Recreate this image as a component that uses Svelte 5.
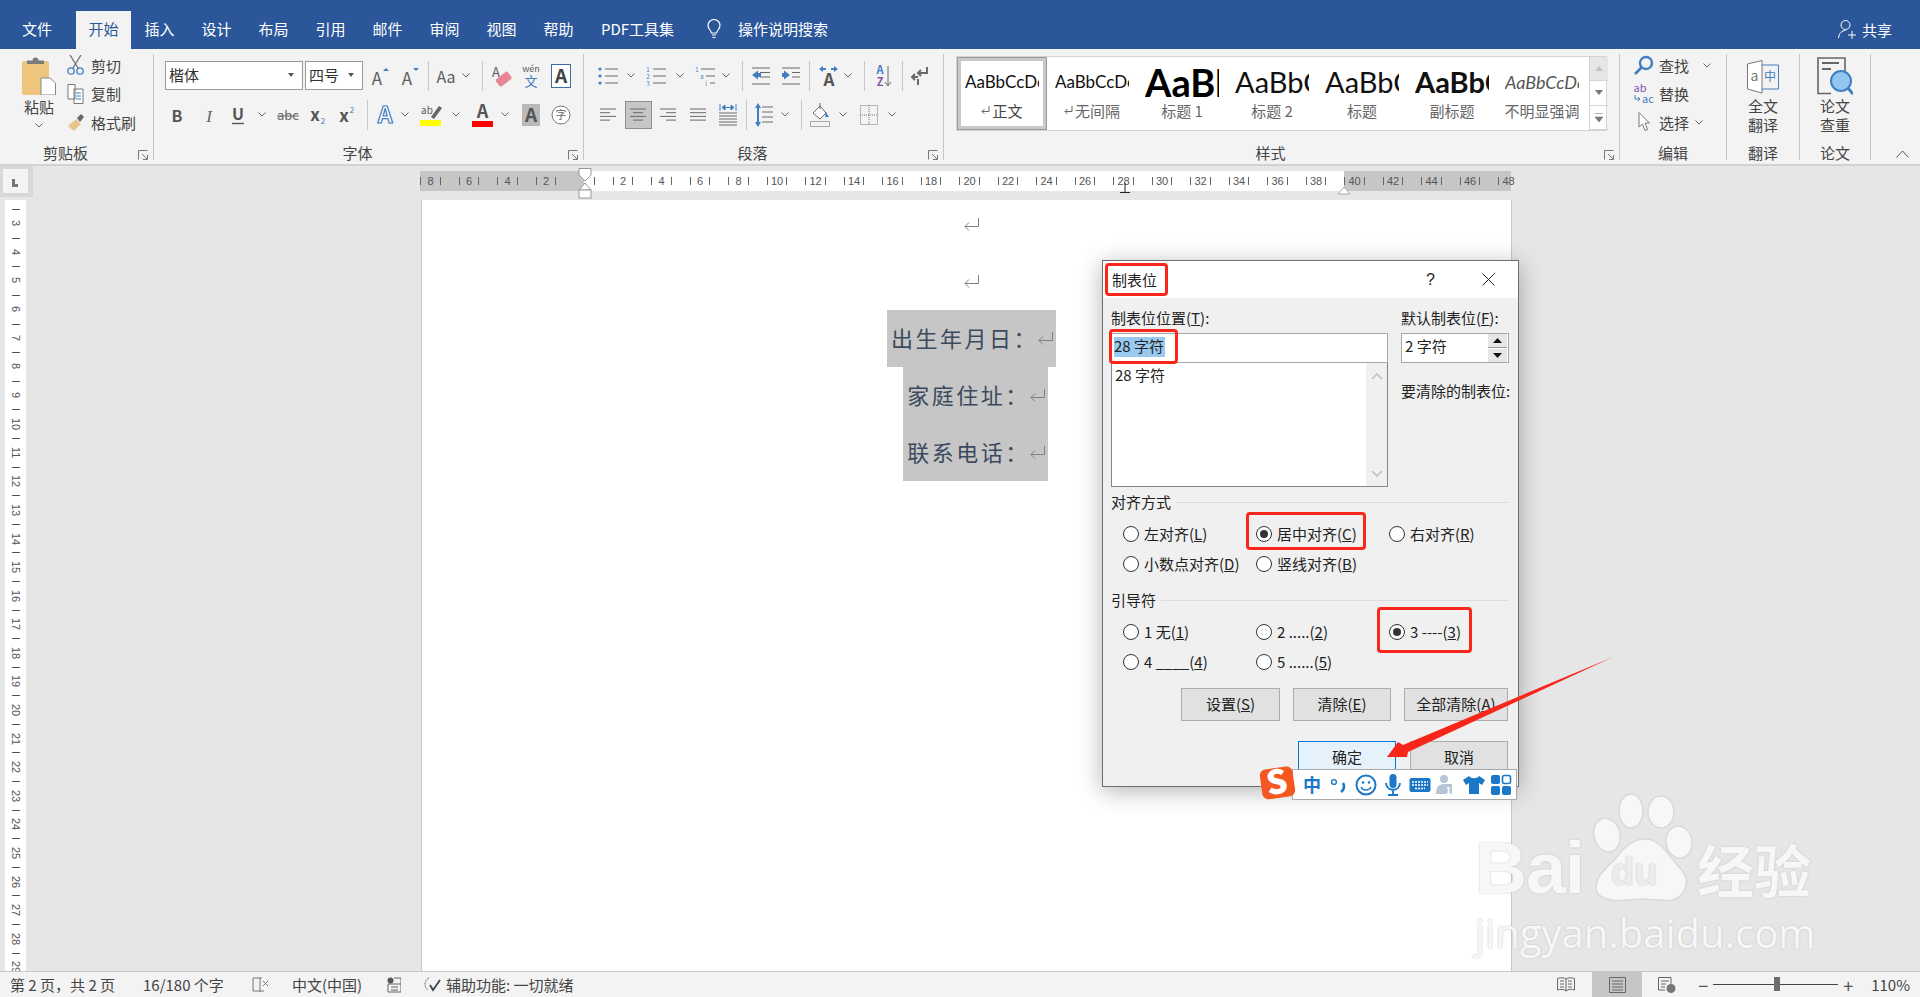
<script>
	// shorthand for the little ribbon glyphs
	const svg = (w, h, b) => `<svg width="${w}" height="${h}" viewBox="0 0 ${w} ${h}" style="display:block;overflow:visible">${b}</svg>`;
	const ln = (x1, y1, x2, y2, c = '#6a6a6a', s = 1) => `<line x1="${x1}" y1="${y1}" x2="${x2}" y2="${y2}" stroke="${c}" stroke-width="${s}"/>`;
	const txt = (x, y, t, size, c = '#5c5c5c', extra = '') => `<text x="${x}" y="${y}" font-size="${size}" fill="${c}" text-anchor="middle" ${extra}>${t}</text>`;
	const blue = '#3f7fc1';
	const stack = (rows) => rows.map(([a, b, y]) => ln(a, y, b, y)).join('');

	const icons = {
		sep: svg(1, 30, ln(0.5, 0, 0.5, 30, '#c8c8c8')),
		chev: svg(8, 5, '<polyline points="0.5,0.5 4,4 7.5,0.5" fill="none" stroke="#666"/>'),
		grow: svg(22, 22, txt(9, 20, 'A', 17) + `<path d="M15 6 L18 3 L21 6Z" fill="${blue}"/>`),
		shrink: svg(22, 22, txt(9, 20, 'A', 17) + `<path d="M15 3 L18 6 L21 3Z" fill="${blue}"/>`),
		aa: svg(24, 20, txt(12, 17, 'Aa', 16)),
		eraser: svg(24, 24, txt(7, 13, 'A', 13) + '<rect x="7" y="11" width="15" height="9" rx="2" fill="#e98696" transform="rotate(-38 14 15)"/>'),
		wen: svg(24, 26, txt(12, 9, 'wén', 9) + txt(12, 23, '文', 13, blue)),
		boxA: svg(20, 24, '<rect x="0.5" y="0.5" width="19" height="23" fill="#fff" stroke="#3a6ea5"/>' + txt(10, 19, 'A', 19, '#444', 'font-weight="700"')),
		bold: svg(14, 18, txt(6, 16, 'B', 16, '#555', 'font-weight="700"')),
		ital: svg(14, 18, txt(7, 16, 'I', 17, '#666', 'font-style="italic" font-family="Liberation Serif"')),
		under: svg(14, 20, txt(7, 15, 'U', 16, '#555', 'font-weight="700"') + ln(1, 18.5, 13, 18.5, '#555', 1.4)),
		strike: svg(22, 14, txt(11, 12, 'abc', 13, '#666') + ln(0, 8, 22, 8, '#666')),
		sub: svg(18, 20, txt(6, 16, 'x', 17, '#555', 'font-weight="700"') + txt(14, 19, '2', 8, blue)),
		sup: svg(18, 20, txt(6, 17, 'x', 17, '#555', 'font-weight="700"') + txt(14, 8, '2', 8, blue)),
		glowA: svg(20, 24, txt(10, 20, 'A', 23, '#fff', `font-weight="700" stroke="${blue}" stroke-width="1.2"`)),
		mark: svg(22, 24, txt(7, 11, 'ab', 10) + '<path d="M11 14 L19 3 L22 5 L14 16Z" fill="#666"/><rect x="0" y="17" width="21" height="6" fill="#ff0"/>'),
		redA: svg(21, 24, txt(10.5, 15, 'A', 18, '#555', 'font-weight="700"') + '<rect x="0" y="18" width="21" height="6" fill="#f00"/>'),
		grayA: svg(18, 22, '<rect width="18" height="22" fill="#b9b9b9"/>' + txt(9, 18, 'A', 19, '#555', 'font-weight="700"')),
		ruby: svg(20, 20, '<circle cx="10" cy="10" r="9" fill="#fff" stroke="#777"/>' + txt(10, 14, '字', 11, '#666')),
		bullets: svg(20, 18, `<circle cx="2" cy="2" r="1.6" fill="${blue}"/><circle cx="2" cy="9" r="1.6" fill="${blue}"/><circle cx="2" cy="16" r="1.6" fill="${blue}"/>` + stack([[7, 20, 2], [7, 20, 9], [7, 20, 16]])),
		nums: svg(20, 20, txt(2, 6, '1', 6, blue) + txt(2, 13, '2', 6, blue) + txt(2, 20, '3', 6, blue) + stack([[7, 20, 3], [7, 20, 10], [7, 20, 17]])),
		multi: svg(20, 20, txt(2, 6, '1', 6, blue) + txt(7, 13, 'a', 6, blue) + txt(11, 20, 'i', 6, blue) + stack([[6, 20, 3], [11, 20, 10], [15, 20, 17]])),
		outdent: svg(18, 18, stack([[0, 18, 1], [8, 18, 5.5], [8, 18, 10], [0, 18, 17]]) + `<path d="M0 8 L6 3.5 V6 H9 V10 H6 V12.5Z" fill="${blue}"/>`),
		indent: svg(18, 18, stack([[0, 18, 1], [10, 18, 5.5], [10, 18, 10], [0, 18, 17]]) + `<path d="M8 8 L2 3.5 V6 H0 V10 H2 V12.5Z" fill="${blue}"/>`),
		kern: svg(20, 20, txt(10, 20, 'A', 17, '#555', 'font-weight="700"') + `<path d="M0 3 L4 0 V2 H7 V4 H4 V6Z M19 3 L15 0 V2 H12 V4 H15 V6Z" fill="${blue}"/>`),
		sort: svg(18, 24, txt(5, 10, 'A', 11, blue, 'font-weight="700"') + txt(5, 22, 'Z', 11, '#8a52a8', 'font-weight="700"') + ln(13, 2, 13, 21) + '<polyline points="10,18 13,22 16,18" fill="none" stroke="#6a6a6a"/>'),
		para: svg(18, 18, '<path d="M17 0 V6 H8 M11 3 L8 6 L11 9 M8 10 H2 M5 7 L2 10 L5 13 M8 12 V18" fill="none" stroke="#6a6a6a" stroke-width="2"/>'),
		left: svg(16, 14, stack([[0, 16, 1], [0, 10, 4.7], [0, 16, 8.4], [0, 10, 12.1]])),
		center: svg(27, 28, '<rect x="0.5" y="0.5" width="26" height="27" fill="#c6c6c6" stroke="#8f8f8f"/>' + stack([[5, 21, 8], [8, 18, 11.7], [5, 21, 15.4], [8, 18, 19.1]])),
		right: svg(16, 14, stack([[0, 16, 1], [6, 16, 4.7], [0, 16, 8.4], [6, 16, 12.1]])),
		just: svg(16, 14, stack([[0, 16, 1], [0, 16, 4.7], [0, 16, 8.4], [0, 16, 12.1]])),
		dist: svg(18, 22, stack([[0, 18, 9], [0, 18, 12], [0, 18, 15], [0, 18, 18], [0, 18, 21]]) + `<path d="M1 0 V7 M17 0 V7" stroke="${blue}"/><path d="M3 3.5 H15 M3 3.5 L6 1 V6Z M15 3.5 L12 1 V6Z" stroke="${blue}" fill="${blue}"/>`),
		spacing: svg(18, 24, stack([[7, 18, 4], [7, 18, 9], [7, 18, 14], [7, 18, 19]]) + `<path d="M3 0 L6 5 H4 V19 H6 L3 24 L0 19 H2 V5 H0Z" fill="${blue}"/>`),
		fill: svg(20, 24, '<path d="M3 10 L10 3 L16 10 L10 16 Z" fill="#fff" stroke="#666"/><path d="M10 0 V6" stroke="#666"/><path d="M16 9 L19 14 L15 14Z" fill="' + blue + '"/><rect x="0.5" y="18.5" width="19" height="5" fill="#f3f3f3" stroke="#aaa"/>'),
		borders: svg(18, 20, '<rect x="0.5" y="0.5" width="17" height="19" fill="none" stroke="#777" stroke-dasharray="1 1"/><path d="M9 0 V20 M0 10 H18" stroke="#777" stroke-dasharray="1 1"/>')
	};

	const fontTop = [[378, 'grow'], [408, 'shrink'], [427, 'sep'], [445, 'aa'], [465, 'chev'], [481, 'sep'], [500, 'eraser'], [530, 'wen'], [560, 'boxA']];
	const fontBottom = [[177, 'bold'], [208, 'ital'], [237, 'under'], [261, 'chev'], [287, 'strike'], [317, 'sub'], [346, 'sup'], [366, 'sep'], [384, 'glowA'], [404, 'chev'], [430, 'mark'], [455, 'chev'], [481, 'redA'], [504, 'chev'], [530, 'grayA'], [560, 'ruby']];
	const paraTop = [[608, 'bullets'], [631, 'chev'], [656, 'nums'], [680, 'chev'], [705, 'multi'], [726, 'chev'], [742, 'sep'], [761, 'outdent'], [791, 'indent'], [809, 'sep'], [829, 'kern'], [848, 'chev'], [864, 'sep'], [884, 'sort'], [902, 'sep'], [919, 'para']];
	const paraBottom = [[608, 'left'], [638, 'center'], [668, 'right'], [698, 'just'], [728, 'dist'], [746, 'sep'], [764, 'spacing'], [785, 'chev'], [801, 'sep'], [820, 'fill'], [843, 'chev'], [869, 'borders'], [892, 'chev']];

	const tabs = ['插入', '设计', '布局', '引用', '邮件', '审阅', '视图', '帮助'];

	const styles = [
		{ preview: 'AaBbCcDc', label: '正文', cls: 'normal', mark: true, active: true },
		{ preview: 'AaBbCcDc', label: '无间隔', cls: 'normal', mark: true },
		{ preview: 'AaBl', label: '标题 1', cls: 'h1' },
		{ preview: 'AaBbC', label: '标题 2', cls: 'h2' },
		{ preview: 'AaBbC', label: '标题', cls: 'h2' },
		{ preview: 'AaBbC', label: '副标题', cls: 'sub' },
		{ preview: 'AaBbCcDc', label: '不明显强调', cls: 'hint' }
	];

	const rulerMarks = Array.from({ length: 29 }, (_, i) => (i === 4 ? '' : Math.abs(i - 4) * 2));
	const sideMarks = Array.from({ length: 27 }, (_, i) => i + 3);

	const doc = ['出生年月日：', '家庭住址：', '联系电话：'];
</script>

{#snippet tools(row, from)}
	{#each row as t, i}
		<span class="cell" style:margin-left="{t[0] - (i ? row[i - 1][0] : from)}px">{@html icons[t[1]]}</span>
	{/each}
{/snippet}

{#snippet launcher()}
	<svg class="launcher" width="10" height="10" viewBox="0 0 10 10">
		<path d="M0.5 9.5 V0.5 H9.5 M4 4 L9 9 M5 9.5 H9.5 V5" fill="none" stroke="#777" />
	</svg>
{/snippet}

{#snippet pilcrow()}
	<svg class="pil" width="15" height="13" viewBox="0 0 15 13">
		<path d="M14.5 0 V8.5 H1 M5 4.5 L1 8.5 L5 12.5" fill="none" stroke="#808080" />
	</svg>
{/snippet}

<div class="word">
	<header class="menu">
		<span class="tab file">文件</span>
		<span class="tab active">开始</span>
		{#each tabs as t}
			<span class="tab">{t}</span>
		{/each}
		<span class="tab pdf">PDF工具集</span>
		<svg class="bulb" width="14" height="20" viewBox="0 0 14 20">
			<path d="M4.5 14 C4 11 1 10 1 6.5 A6 6 0 0 1 13 6.5 C13 10 10 11 9.5 14 Z M5 16 H9 M5.5 18.5 H8.5" fill="none" stroke="#fff" stroke-width="1.2" />
		</svg>
		<span class="search">操作说明搜索</span>
		<span class="share">
			<svg width="18" height="20" viewBox="0 0 18 20">
				<circle cx="7.5" cy="6" r="4.5" fill="none" stroke="#fff" />
				<path d="M0.5 19 C1 14 4 11.5 7.5 11.5 M10 16 H18 M14 12 V20" fill="none" stroke="#fff" />
			</svg>
			共享
		</span>
	</header>

	<section class="ribbon">
		<div class="group g-clip">
			<div class="clip">
				<div class="paste">
					<svg width="34" height="38" viewBox="0 0 34 38">
						<rect x="0" y="4" width="27" height="34" rx="2" fill="#edc57c" />
						<path d="M5 7 V3.5 H10.5 A3 3 0 0 1 16.5 3.5 H22 V7Z" fill="#7b7b7b" />
						<path d="M19 21 H28 L33.5 26 V38 H19Z" fill="#fff" stroke="#888" />
					</svg>
					<span>粘贴</span>
					{@html icons.chev}
				</div>
				<div class="clip-list">
					<div>
						<svg width="17" height="20" viewBox="0 0 17 20">
							<path d="M3 0 L11 13 M14 0 L6 13" stroke="#777" stroke-width="1.4" />
							<circle cx="4" cy="16" r="3.2" fill="none" stroke={blue} stroke-width="1.3" />
							<circle cx="13" cy="16" r="3.2" fill="none" stroke={blue} stroke-width="1.3" />
						</svg>
						剪切
					</div>
					<div>
						<svg width="17" height="20" viewBox="0 0 17 20">
							<path d="M1 .5 H8 V15 H1Z M7 5 H16 V19.5 H7Z" fill="#fff" stroke="#777" />
							<path d="M9 9 H14 M9 12 H14 M9 15 H14" stroke={blue} />
						</svg>
						复制
					</div>
					<div>
						<svg width="17" height="20" viewBox="0 0 17 20">
							<path d="M1 14 L9 7 L14 12 L7 19Z" fill="#e5c48d" />
							<path d="M10 6 L14 2 L17 5 L13 10Z" fill="#666" />
						</svg>
						格式刷
					</div>
				</div>
			</div>
			<div class="group-label">剪贴板</div>
			{@render launcher()}
		</div>

		<div class="group g-font">
			<div class="row">
				<div class="select name">楷体<i></i></div>
				<div class="select size">四号<i></i></div>
				{@render tools(fontTop, 362)}
			</div>
			<div class="row">{@render tools(fontBottom, 153)}</div>
			<div class="group-label">字体</div>
			{@render launcher()}
		</div>

		<div class="group g-para">
			<div class="row">{@render tools(paraTop, 584)}</div>
			<div class="row">{@render tools(paraBottom, 584)}</div>
			<div class="group-label">段落</div>
			{@render launcher()}
		</div>

		<div class="group g-styles">
			<div class="gallery">
				{#each styles as s}
					<div class="style" class:active={s.active}>
						<div class="preview {s.cls}"><span>{s.preview}</span></div>
						<div class="style-name">
							{#if s.mark}<svg width="9" height="9" viewBox="0 0 9 9"><path d="M8 0 V5.5 H1 M3.5 3 L1 5.5 L3.5 8" fill="none" stroke="#666" /></svg>{/if}
							{s.label}
						</div>
					</div>
				{/each}
				<div class="gallery-scroll">
					<div class="up"><svg width="8" height="5" viewBox="0 0 8 5"><path d="M0 5 L4 0 L8 5Z" fill="#c0c0c0" /></svg></div>
					<div><svg width="8" height="5" viewBox="0 0 8 5"><path d="M0 0 L4 5 L8 0Z" fill="#777" /></svg></div>
					<div><svg width="8" height="9" viewBox="0 0 8 9"><path d="M0 .5 H8 M0 4 L4 9 L8 4Z" fill="#777" stroke="#777" stroke-width=".6" /></svg></div>
				</div>
			</div>
			<div class="group-label">样式</div>
			{@render launcher()}
		</div>

		<div class="group g-edit">
			<div class="edit-list">
				<div>
					<svg width="20" height="20" viewBox="0 0 20 20">
						<circle cx="12" cy="8" r="6" fill="none" stroke={blue} stroke-width="2.4" />
						<path d="M7.5 12.5 L1 19" stroke={blue} stroke-width="2.6" />
					</svg>
					<span>查找</span>{@html icons.chev}
				</div>
				<div>
					<svg width="20" height="20" viewBox="0 0 20 20">
						<text x="6" y="8" font-size="11" fill="#8a52a8" text-anchor="middle">ab</text>
						<text x="14" y="19" font-size="11" fill={blue} text-anchor="middle">ac</text>
						<path d="M1 11 V15 H6 M4 13 L6 15 L4 17" fill="none" stroke={blue} />
					</svg>
					<span>替换</span>
				</div>
				<div class="pick">
					<svg width="20" height="20" viewBox="0 0 20 20">
						<path d="M5 0.5 V15 L8.5 12 L11 18.5 L13.5 17.5 L11 11 L15.5 11Z" fill="#fff" stroke="#777" />
					</svg>
					<span>选择</span>{@html icons.chev}
				</div>
			</div>
			<div class="group-label">编辑</div>
		</div>

		<div class="group g-trans">
			<div class="big">
				<svg width="32" height="34" viewBox="0 0 32 34">
					<path d="M0.5 4 L15 0.5 V33 L0.5 29Z" fill="#fff" stroke="#777" />
					<text x="7.5" y="21" font-size="14" fill="#777" text-anchor="middle">a</text>
					<path d="M15 5 H31.5 V29 H15" fill="none" stroke={blue} />
					<text x="23" y="21" font-size="12" fill={blue} text-anchor="middle">中</text>
				</svg>
				<span>全文<br />翻译</span>
			</div>
			<div class="group-label">翻译</div>
		</div>

		<div class="group g-paper">
			<div class="big">
				<svg width="36" height="38" viewBox="0 0 36 38">
					<path d="M14 36.5 H1 V1 H28 V14" fill="none" stroke="#666" stroke-width="1.6" />
					<path d="M5 6 H22 M5 12 H14" stroke="#666" stroke-width="2" />
					<circle cx="24" cy="24" r="10" fill="#92c5ef" stroke={blue} stroke-width="2" />
					<path d="M31 31 L36 37" stroke={blue} stroke-width="3" />
				</svg>
				<span>论文<br />查重</span>
			</div>
			<div class="group-label">论文</div>
		</div>

		<svg class="collapse" width="13" height="8" viewBox="0 0 13 8">
			<polyline points="0.5,7.5 6.5,1 12.5,7.5" fill="none" stroke="#555" />
		</svg>
	</section>

	<main class="workspace">
		<div class="top-strip">
			<div class="corner"><i></i></div>
			<div class="ruler">
				{#each rulerMarks as m}
					<span class="mark-cell" class:blank={m === ''}>{m}</span>
				{/each}
				<svg class="indent" width="14" height="31" viewBox="0 0 14 31">
					<path d="M1 .5 H13 V7 L7 13 L1 7Z M1 22 L7 15 L13 22Z" fill="#fff" stroke="#999" />
					<rect x="1" y="22" width="12" height="8" fill="#fff" stroke="#999" />
				</svg>
				<svg class="tabstop" width="10" height="10" viewBox="0 0 10 10"><path d="M5 0 V9 M0 9.5 H10" stroke="#222" /></svg>
				<svg class="indent-right" width="14" height="9" viewBox="0 0 14 9"><path d="M1 8 L7 1 L13 8Z" fill="#fff" stroke="#aaa" /></svg>
			</div>
		</div>
		<div class="desk">
			<div class="side-ruler">
				{#each sideMarks as n}
					<div class="side-cell"><i></i><span>{n}</span></div>
				{/each}
			</div>
			<div class="page">
				<div class="line">{@render pilcrow()}</div>
				<div class="line">{@render pilcrow()}</div>
				{#each doc as d, i}
					<div class="line"><span class="picked" class:narrow={i > 0}>{d}{@render pilcrow()}</span></div>
				{/each}
			</div>
		</div>
	</main>

	<footer class="status">
		<span class="s-a">第 2 页，共 2 页</span>
		<span class="s-b">16/180 个字</span>
		<svg class="s-c" width="18" height="16" viewBox="0 0 18 16">
			<path d="M8 1 H1 V14 H8 M10 1 H8 V15 M12 14 H8" fill="none" stroke="#777" />
			<path d="M11 4 L16 9 M16 4 L11 9" stroke="#777" />
		</svg>
		<span class="s-d">中文(中国)</span>
		<svg class="s-e" width="14" height="16" viewBox="0 0 14 16">
			<circle cx="3.5" cy="3.5" r="3" fill="#555" />
			<path d="M7 1 H14 V15 H1 V7 H14 M4 10 H11 M4 13 H11" fill="none" stroke="#666" />
		</svg>
		<svg class="s-f" width="18" height="18" viewBox="0 0 18 18">
			<path d="M6 2 A7 7 0 0 0 2 9 A7 7 0 0 0 5 14" fill="none" stroke="#666" stroke-dasharray="2 1" />
			<path d="M7 9 L10 14 L17 4" fill="none" stroke="#444" stroke-width="1.8" />
		</svg>
		<span class="s-g">辅助功能: 一切就绪</span>
		<div class="view">
			<svg class="v-read" width="18" height="15" viewBox="0 0 18 15">
				<path d="M9 2 C7 .5 3 .5 .5 1.5 V13 C3 12 7 12 9 14 C11 12 15 12 17.5 13 V1.5 C15 .5 11 .5 9 2 V14 M3 4 H7 M3 7 H7 M3 10 H7 M11 4 H15 M11 7 H15 M11 10 H15" fill="none" stroke="#666" />
			</svg>
			<div class="v-print">
				<svg width="17" height="16" viewBox="0 0 17 16">
					<path d="M.5 .5 H16.5 V15.5 H.5Z M3 4 H14 M3 7 H14 M3 10 H14 M3 13 H14" fill="none" stroke="#666" />
				</svg>
			</div>
			<svg class="v-web" width="18" height="16" viewBox="0 0 18 16">
				<path d="M.5 .5 H13 V7 M.5 .5 V13 H7 M3 4 H11 M3 7 H8 M3 10 H7" fill="none" stroke="#666" />
				<circle cx="13" cy="11.5" r="4.5" fill="#777" />
			</svg>
			<div class="zoom">
				<span class="z-sign">−</span>
				<div class="z-track"><i></i></div>
				<span class="z-sign">+</span>
			</div>
			<span class="z-value">110%</span>
		</div>
	</footer>

	<div class="watermark" aria-hidden="true">
		<svg class="paw" width="108" height="112" viewBox="0 0 108 112">
			<g fill="#f7f7f7" stroke="#d9d9d9" stroke-width="1.5">
				<ellipse cx="41" cy="18" rx="12" ry="17" />
				<ellipse cx="71" cy="19" rx="13" ry="16" />
				<ellipse cx="17" cy="42" rx="13" ry="17" transform="rotate(-15 17 42)" />
				<ellipse cx="89" cy="49" rx="13" ry="16" transform="rotate(-10 89 49)" />
				<path d="M7 100 C2 85 16 76 26 65 C34 54 44 45 56 46 C68 46 76 58 84 68 C92 78 102 84 93 100 C84 112 68 106 53 106 C38 106 18 112 7 100Z" />
			</g>
		</svg>
		<span class="wm-bai">Bai</span>
		<span class="wm-du">du</span>
		<span class="wm-cn">经验</span>
		<span class="wm-url">jingyan.baidu.com</span>
	</div>

	<div class="dialog">
		<div class="d-title">
			<span>制表位</span>
			<span class="d-help">?</span>
			<svg class="d-close" width="13" height="13" viewBox="0 0 13 13"><path d="M.5 .5 L12.5 12.5 M12.5 .5 L.5 12.5" stroke="#222" /></svg>
		</div>
		<div class="d-body">
			<div class="d-top">
				<div>
					<div class="d-label">制表位位置(<u>T</u>):</div>
					<div class="field"><span class="sel">28 字符</span></div>
					<div class="listbox">
						<div class="list-text">28 字符</div>
						<div class="list-scroll">
							<svg width="12" height="7" viewBox="0 0 12 7"><polyline points="1,6 6,1 11,6" fill="none" stroke="#bbb" stroke-width="1.4" /></svg>
							<svg width="12" height="7" viewBox="0 0 12 7"><polyline points="1,1 6,6 11,1" fill="none" stroke="#bbb" stroke-width="1.4" /></svg>
						</div>
					</div>
				</div>
				<div>
					<div class="d-label">默认制表位(<u>F</u>):</div>
					<div class="field spin-field">
						<span>2 字符</span>
						<div class="spin">
							<div><svg width="9" height="5" viewBox="0 0 9 5"><path d="M0 5 L4.5 0 L9 5Z" fill="#111" /></svg></div>
							<div><svg width="9" height="5" viewBox="0 0 9 5"><path d="M0 0 L4.5 5 L9 0Z" fill="#111" /></svg></div>
						</div>
					</div>
					<div class="d-label clear-label">要清除的制表位:</div>
				</div>
			</div>

			<div class="legend">对齐方式</div>
			<div class="radios">
				<label class="radio"><i></i><span>左对齐(<u>L</u>)</span></label>
				<label class="radio on"><i></i><span>居中对齐(<u>C</u>)</span></label>
				<label class="radio"><i></i><span>右对齐(<u>R</u>)</span></label>
				<label class="radio"><i></i><span>小数点对齐(<u>D</u>)</span></label>
				<label class="radio"><i></i><span>竖线对齐(<u>B</u>)</span></label>
			</div>

			<div class="legend second">引导符</div>
			<div class="radios">
				<label class="radio"><i></i><span>1 无(<u>1</u>)</span></label>
				<label class="radio"><i></i><span>2 .....(<u>2</u>)</span></label>
				<label class="radio on"><i></i><span>3 ----(<u>3</u>)</span></label>
				<label class="radio"><i></i><span>4 ____(<u>4</u>)</span></label>
				<label class="radio"><i></i><span>5 ......(<u>5</u>)</span></label>
			</div>

			<div class="btns">
				<button class="w99">设置(<u>S</u>)</button>
				<button class="w98">清除(<u>E</u>)</button>
				<button class="w104">全部清除(<u>A</u>)</button>
			</div>
			<div class="btns ok-row">
				<button class="w98 primary">确定</button>
				<button class="w98">取消</button>
			</div>
		</div>

		<i class="red r-title"></i>
		<i class="red r-field"></i>
		<i class="red r-center"></i>
		<i class="red r-leader"></i>
	</div>

	<div class="ime">
		<svg width="22" height="22" viewBox="0 0 22 22"><text x="11" y="18" font-size="18" font-weight="700" fill="#1b78c9" text-anchor="middle">中</text></svg>
		<svg width="22" height="22" viewBox="0 0 22 22"><circle cx="6" cy="8" r="2.4" fill="none" stroke="#1b78c9" stroke-width="1.4" /><path d="M15 9 C17 12 16 16 13 18" fill="none" stroke="#1b78c9" stroke-width="2.6" /></svg>
		<svg width="22" height="22" viewBox="0 0 22 22"><circle cx="11" cy="11" r="9.5" fill="none" stroke="#1b78c9" stroke-width="2" /><circle cx="8" cy="8.5" r="1.3" fill="#1b78c9" /><circle cx="14" cy="8.5" r="1.3" fill="#1b78c9" /><path d="M6 13 C8 17 14 17 16 13" fill="none" stroke="#1b78c9" stroke-width="1.6" /></svg>
		<svg width="22" height="22" viewBox="0 0 22 22"><rect x="7.5" y="0" width="7" height="14" rx="3.5" fill="#1b78c9" /><path d="M4 9 C4 18 18 18 18 9 M11 16 V20 M6 21 H16" fill="none" stroke="#1b78c9" stroke-width="1.8" /></svg>
		<svg width="22" height="22" viewBox="0 0 22 22"><rect x=".5" y="4" width="21" height="14" rx="2" fill="#1b78c9" /><path d="M3 8 H19 M3 11 H19 M6 14.5 H16" stroke="#fff" stroke-width="1.6" stroke-dasharray="2 1" /></svg>
		<svg width="22" height="22" viewBox="0 0 22 22"><circle cx="8" cy="5" r="4" fill="#b7c6d6" /><path d="M0 20 C0 12 4 10 8 10 H16 V20Z" fill="#b7c6d6" /><text x="15" y="20" font-size="9" font-weight="700" fill="#fff" text-anchor="middle">17</text></svg>
		<svg width="22" height="22" viewBox="0 0 22 22"><path d="M6 2 L0 6 L3 11 L6 9 V20 H16 V9 L19 11 L22 6 L16 2 C14 5 8 5 6 2Z" fill="#1b78c9" /></svg>
		<svg width="22" height="22" viewBox="0 0 22 22"><rect x="1" y="1" width="9" height="9" rx="2" fill="#1b78c9" /><rect x="12.5" y="1.5" width="8" height="8" rx="2" fill="#fff" stroke="#1b78c9" stroke-width="1.6" /><rect x="1" y="12" width="9" height="9" rx="2" fill="#1b78c9" /><rect x="12" y="12" width="9" height="9" rx="2" fill="#1b78c9" /></svg>
	</div>
	<svg class="ime-logo" width="38" height="36" viewBox="0 0 38 36">
		<rect x="2" y="3" width="33" height="30" rx="6" fill="#f4571f" transform="rotate(-8 18 18)" />
		<text x="18" y="29" font-size="33" font-weight="900" fill="#fff" text-anchor="middle" transform="rotate(-8 18 18)">S</text>
	</svg>

	<svg class="arrow" width="240" height="110" viewBox="1380 650 240 110">
		<polygon points="1613,657 1408,752 1407,757 1387,757 1398,742 1403,745" fill="#f8261a" />
	</svg>
</div>

<style>
	:global(body) {
		margin: 0;
	}

	.word {
		position: relative;
		display: flex;
		flex-direction: column;
		width: 1920px;
		height: 997px;
		overflow: hidden;
		background: #e6e6e6;
		font-family: 'Noto Sans CJK SC', 'Liberation Sans', sans-serif;
		font-size: 15px;
		color: #444;
	}

	/* title / tab strip */
	.menu {
		display: flex;
		align-items: flex-end;
		flex: none;
		height: 49px;
		padding-left: 8px;
		background: #2b579a;
		color: #fff;
	}

	.tab {
		width: 57px;
		height: 38px;
		line-height: 36px;
		text-align: center;
	}

	.tab.file {
		width: 58px;
		margin-right: 10px;
	}

	.tab.active {
		width: 55px;
		background: #f3f3f3;
		color: #2b579a;
	}

	.tab.pdf {
		width: auto;
		padding: 0 14px;
	}

	.bulb {
		align-self: center;
		margin: 9px 0 0 19px;
	}

	.search {
		height: 38px;
		line-height: 36px;
		margin-left: 17px;
	}

	.share {
		display: flex;
		align-items: center;
		gap: 6px;
		height: 36px;
		margin-bottom: 2px;
		margin-left: auto;
		padding-right: 28px;
	}

	/* ribbon */
	.ribbon {
		position: relative;
		display: flex;
		flex: none;
		box-sizing: border-box;
		height: 117px;
		padding-top: 5px;
		background: #f3f3f3;
		border-bottom: 2px solid #d2d2d2;
	}

	.group {
		position: relative;
		display: flex;
		flex-direction: column;
		box-sizing: border-box;
		height: 106px;
		border-right: 1px solid #c4c4c4;
	}

	.g-clip { width: 154px; }
	.g-font { width: 430px; }
	.g-para { width: 360px; }
	.g-styles { width: 676px; }
	.g-edit { width: 107px; }
	.g-trans { width: 73px; }
	.g-paper { width: 71px; }

	.group-label {
		position: absolute;
		left: 0;
		right: 0;
		top: 88px;
		height: 22px;
		line-height: 22px;
		text-align: center;
	}

	.g-clip .group-label,
	.g-font .group-label,
	.g-para .group-label,
	.g-styles .group-label {
		right: 22px;
	}

	.launcher {
		position: absolute;
		right: 5px;
		bottom: 0;
	}

	.collapse {
		position: absolute;
		right: 11px;
		top: 101px;
	}

	.row {
		display: flex;
		align-items: center;
		height: 39px;
		flex: none;
	}

	.row:first-child {
		margin-top: 2px;
	}

	.cell {
		display: flex;
		justify-content: center;
		align-items: center;
		flex: none;
		width: 0;
	}

	.select {
		position: relative;
		box-sizing: border-box;
		flex: none;
		height: 29px;
		line-height: 26px;
		padding-left: 3px;
		background: #fff;
		border: 1px solid #9a9a9a;
		color: #333;
	}

	.select i {
		position: absolute;
		right: 8px;
		top: 11px;
		border: 3.5px solid transparent;
		border-top: 4px solid #555;
	}

	.select.name {
		width: 138px;
		margin-left: 11px;
		margin-right: 2px;
	}

	.select.size {
		width: 58px;
	}

	.clip {
		display: flex;
		height: 84px;
	}

	.paste {
		display: flex;
		flex-direction: column;
		align-items: center;
		width: 34px;
		margin: 3px 0 0 22px;
		line-height: 22px;
	}

	.paste span {
		margin: 1px -6px 5px;
		white-space: nowrap;
	}

	.clip-list {
		margin: -3px 0 0 11px;
	}

	.clip-list div {
		display: flex;
		align-items: center;
		gap: 7px;
		height: 28.5px;
		white-space: nowrap;
	}

	/* style gallery */
	.gallery {
		display: flex;
		box-sizing: border-box;
		width: 651px;
		height: 75px;
		margin: 2px 0 0 12px;
		background: #fff;
		border: 1px solid #d4d4d4;
	}

	.style {
		box-sizing: border-box;
		flex: none;
		width: 90px;
		height: 73px;
		text-align: center;
	}

	.style.active {
		border: 4px solid #c9c9c9;
		outline: 1px solid #9a9a9a;
		outline-offset: -1px;
	}

	.preview {
		display: flex;
		justify-content: center;
		height: 36px;
		margin-top: 7px;
		overflow: hidden;
		font-family: Lato, 'Liberation Sans', sans-serif;
		color: #111;
		line-height: 36px;
	}

	.style.active .preview {
		margin-top: 3px;
	}

	.preview span {
		display: block;
		width: 74px;
		overflow: hidden;
		text-align: left;
		white-space: nowrap;
	}

	.preview.normal { font-size: 17px; }
	.preview.h1 { font-size: 38px; font-weight: 700; color: #000; }
	.preview.h2 { font-size: 29px; }
	.preview.sub { font-size: 29px; font-weight: 700; }
	.preview.hint { font-size: 18px; font-style: italic; color: #555; }

	.style-name {
		display: flex;
		justify-content: center;
		align-items: center;
		gap: 2px;
		height: 22px;
		margin-top: -1px;
		color: #666;
		white-space: nowrap;
	}

	.style.active .style-name {
		color: #444;
	}

	.gallery-scroll {
		flex: none;
		width: 18px;
		margin-left: 2px;
		border-left: 1px solid #d4d4d4;
	}

	.gallery-scroll div {
		display: flex;
		justify-content: center;
		align-items: center;
		height: 24.3px;
		border-bottom: 1px solid #d4d4d4;
		box-sizing: border-box;
	}

	.gallery-scroll .up {
		background: #e6e6e6;
	}

	.edit-list {
		margin: -3px 0 0 14px;
	}

	.edit-list div {
		display: flex;
		align-items: center;
		height: 28.5px;
	}

	.edit-list span {
		margin: 0 14px 0 5px;
	}

	.edit-list .pick span {
		margin-right: 6px;
	}

	.big {
		display: flex;
		flex-direction: column;
		align-items: center;
		height: 88px;
		line-height: 18.5px;
		text-align: center;
	}

	.g-trans .big svg {
		margin: 6px 0 0;
	}

	.g-trans .big span {
		margin-top: 3px;
	}

	.g-paper .big svg {
		margin: 3px 0 0;
	}

	.g-paper .big span {
		margin-top: 2px;
	}

	/* document area */
	.workspace {
		flex: 1;
		min-height: 0;
		overflow: hidden;
	}

	.top-strip {
		display: flex;
		height: 34px;
	}

	.corner {
		box-sizing: border-box;
		flex: none;
		width: 33px;
		height: 31px;
		padding: 3px 5px 4px 3px;
		background: #d8d8d8;
	}

	.corner i {
		position: relative;
		display: block;
		height: 24px;
		background: #f4f4f4;
	}

	.corner i::after {
		content: '';
		position: absolute;
		left: 9px;
		top: 10px;
		width: 3px;
		height: 5px;
		border-left: 3px solid #777;
		border-bottom: 3px solid #777;
	}

	.ruler {
		position: relative;
		display: flex;
		flex: none;
		width: 1091px;
		height: 20px;
		margin: 5px 0 0 387px;
		background: linear-gradient(to right, #c6c6c6 164px, #fff 164px, #fff 924px, #c6c6c6 924px);
		font-family: 'Liberation Sans', sans-serif;
		font-size: 11px;
		line-height: 20px;
		color: #555;
	}

	.mark-cell {
		position: relative;
		flex: none;
		width: 38.5px;
		text-align: center;
	}

	.mark-cell:first-of-type {
		margin-left: -8.65px;
	}

	.mark-cell::before,
	.mark-cell::after {
		content: '';
		position: absolute;
		top: 6px;
		width: 1px;
		height: 8px;
		background: #666;
	}

	.mark-cell::before {
		left: 9px;
	}

	.mark-cell::after {
		right: 9px;
	}

	.mark-cell.blank::before,
	.mark-cell:nth-last-child(4)::after {
		display: none;
	}

	.indent {
		position: absolute;
		left: 158px;
		top: -3px;
	}

	.tabstop {
		position: absolute;
		left: 700px;
		top: 12px;
	}

	.indent-right {
		position: absolute;
		left: 917px;
		top: 15px;
	}

	.desk {
		display: flex;
		align-items: flex-start;
	}

	.side-ruler {
		flex: none;
		width: 21px;
		margin-left: 5px;
		background: #fff;
		font-family: 'Liberation Sans', sans-serif;
		font-size: 11px;
		color: #555;
	}

	.side-cell {
		display: flex;
		flex-direction: column;
		align-items: center;
		height: 28.6px;
	}

	.side-cell i {
		flex: none;
		width: 8px;
		height: 1px;
		margin-top: 9.2px;
		background: #555;
	}

	.side-cell span {
		height: 14px;
		line-height: 21px;
		margin-top: 7.8px;
		text-align: center;
		writing-mode: vertical-rl;
		white-space: nowrap;
	}

	.page {
		box-sizing: border-box;
		flex: none;
		width: 1091px;
		height: 780px;
		margin-left: 395px;
		padding-left: 10px;
		background: #fff;
		border: solid #c6c6c6;
		border-width: 0 1px;
	}

	.line {
		display: flex;
		justify-content: center;
		align-items: center;
		height: 57px;
		font-size: 22px;
		letter-spacing: 2.5px;
		color: #3b4a5e;
	}

	.line:first-child {
		margin-top: -5px;
	}

	.line:nth-child(3) {
		margin-top: 1px;
	}

	.picked {
		display: flex;
		align-items: center;
		height: 57px;
		padding: 0 3px 3px 4px;
		box-sizing: border-box;
		background: #c6c6c6;
	}

	.picked.narrow {
		margin-left: 8px;
	}

	.pil {
		flex: none;
		margin-top: 2px;
	}

	/* status bar */
	.status {
		display: flex;
		align-items: center;
		flex: none;
		box-sizing: border-box;
		height: 26px;
		background: #f3f3f3;
		border-top: 1px solid #c8c8c8;
		font-size: 15px;
		color: #444;
		white-space: nowrap;
	}

	.s-a { margin-left: 10px; width: 133px; }
	.s-b { width: 109px; }
	.s-c { width: 18px; margin-right: 22px; }
	.s-d { width: 95px; }
	.s-e { margin-right: 22px; }
	.s-f { margin-right: 5px; }

	.view {
		display: flex;
		align-items: center;
		height: 25px;
		margin-left: auto;
	}

	.v-read { margin-right: 17px; }

	.v-print {
		display: flex;
		justify-content: center;
		align-items: center;
		width: 50px;
		height: 25px;
		background: #c6c6c6;
	}

	.v-web { margin-left: 16px; }

	.zoom {
		display: flex;
		align-items: center;
		margin-left: 20px;
	}

	.z-sign {
		width: 14px;
		text-align: center;
		font-size: 18px;
		line-height: 20px;
		color: #555;
	}

	.z-track {
		position: relative;
		width: 125px;
		height: 1px;
		margin: 0 3px;
		background: #444;
	}

	.z-track i {
		position: absolute;
		left: 61px;
		top: -7px;
		width: 6px;
		height: 14px;
		background: #6d6d6d;
	}

	.z-value {
		margin: 0 10px 0 16px;
	}

	/* watermark */
	.watermark {
		position: absolute;
		left: 0;
		top: 0;
		pointer-events: none;
	}

	.paw {
		position: absolute;
		left: 1590px;
		top: 793px;
	}

	.wm-bai,
	.wm-du,
	.wm-cn,
	.wm-url {
		position: absolute;
		color: #f7f7f7;
		text-shadow: 0 0 2px #bdbdbd;
		white-space: nowrap;
	}

	.wm-bai {
		left: 1475px;
		top: 826px;
		font: 700 72px/84px 'Liberation Sans', sans-serif;
		letter-spacing: -1px;
	}

	.wm-du {
		left: 1611px;
		top: 847px;
		font: 700 38px/50px 'Liberation Sans', sans-serif;
		color: #ececec;
	}

	.wm-cn {
		left: 1697px;
		top: 828px;
		font: 700 57px/80px 'Noto Sans CJK SC', sans-serif;
	}

	.wm-url {
		left: 1475px;
		top: 910px;
		font: 400 40px/46px 'Open Sans', sans-serif;
	}

	/* dialog */
	.dialog {
		position: absolute;
		left: 1102px;
		top: 260px;
		box-sizing: border-box;
		width: 417px;
		height: 527px;
		background: #f0f0f0;
		border: 1px solid #6e6e6e;
		box-shadow: 0 4px 22px rgba(0, 0, 0, 0.3);
		color: #222;
	}

	.d-title {
		display: flex;
		align-items: center;
		height: 37px;
		padding-left: 9px;
		background: #fff;
	}

	.d-help {
		margin-left: 269px;
		font-size: 16px;
		font-family: 'Liberation Sans', sans-serif;
	}

	.d-close {
		margin-left: 47px;
	}

	.d-body {
		padding: 0 10px 0 8px;
	}

	.d-top {
		display: grid;
		grid-template-columns: 277px 108px;
		column-gap: 13px;
		padding-top: 10px;
	}

	.d-label {
		height: 20px;
		line-height: 20px;
		margin-bottom: 5px;
		white-space: nowrap;
	}

	.clear-label {
		margin-top: 18px;
	}

	.field {
		box-sizing: border-box;
		height: 30px;
		padding: 2px 2px 0;
		background: #fff;
		border: 1px solid #a8a8a8;
		line-height: 20px;
	}

	.sel {
		display: inline-block;
		height: 20px;
		line-height: 18px;
		padding-right: 1px;
		background: #99c9ef;
	}

	.spin-field {
		display: flex;
		justify-content: space-between;
		padding: 0 1px 0 3px;
		line-height: 24px;
	}

	.spin {
		width: 19px;
	}

	.spin div {
		display: flex;
		justify-content: center;
		align-items: center;
		height: 13px;
		background: #e6e6e6;
		border-bottom: 1px solid #9a9a9a;
	}

	.spin div:last-child {
		border-bottom: 0;
		margin-top: 1px;
	}

	.listbox {
		display: flex;
		box-sizing: border-box;
		height: 124px;
		background: #fff;
		border: 1px solid #84848c;
		border-top: 0;
	}

	.list-text {
		flex: 1;
		padding: 1px 3px 0;
		line-height: 22px;
	}

	.list-scroll {
		display: flex;
		flex-direction: column;
		justify-content: space-between;
		align-items: center;
		box-sizing: border-box;
		width: 21px;
		padding: 10px 0 9px;
		background: #f0f0f0;
	}

	.legend {
		display: flex;
		align-items: center;
		gap: 5px;
		height: 20px;
		margin-top: 5px;
		line-height: 20px;
	}

	.legend::after {
		content: '';
		flex: 1;
		height: 1px;
		background: #dcdcdc;
	}

	.legend.second {
		margin-top: 11px;
	}

	.radios {
		display: grid;
		grid-template-columns: 133px 133px 1fr;
		grid-auto-rows: 30px;
		margin-top: 7px;
		padding-left: 12px;
	}

	.radio {
		display: flex;
		align-items: center;
		gap: 5px;
		white-space: nowrap;
	}

	.radio span {
		margin-top: -2px;
	}

	.radio i {
		box-sizing: border-box;
		flex: none;
		display: flex;
		justify-content: center;
		align-items: center;
		width: 16px;
		height: 16px;
		background: #fff;
		border: 1px solid #333;
		border-radius: 50%;
	}

	.radio.on i::after {
		content: '';
		width: 8px;
		height: 8px;
		background: #333;
		border-radius: 50%;
	}

	.btns {
		display: flex;
		justify-content: flex-end;
		gap: 13px;
		margin-top: 11px;
	}

	.ok-row {
		gap: 14px;
		margin-top: 20px;
	}

	button {
		box-sizing: border-box;
		height: 33px;
		padding: 0 0 2px;
		background: #e1e1e1;
		border: 1px solid #adadad;
		font: inherit;
		color: #222;
	}

	.w98 { width: 98px; }
	.w99 { width: 99px; }
	.w104 { width: 104px; }

	.primary {
		background: #e5f1fb;
		border-color: #0078d7;
	}

	.red {
		position: absolute;
		box-sizing: border-box;
		border: 3px solid #f9261b;
		border-radius: 4px;
	}

	.r-title { left: 2px; top: 2px; width: 63px; height: 33px; }
	.r-field { left: 6px; top: 68px; width: 69px; height: 35px; }
	.r-center { left: 143px; top: 251px; width: 120px; height: 38px; }
	.r-leader { left: 274px; top: 346px; width: 95px; height: 46px; }

	/* input method bar */
	.ime {
		position: absolute;
		left: 1292px;
		top: 769px;
		display: flex;
		align-items: center;
		gap: 5px;
		box-sizing: border-box;
		width: 225px;
		height: 31px;
		padding-left: 8px;
		background: #fff;
		border: 1px solid #a9a9a9;
	}

	.ime-logo {
		position: absolute;
		left: 1259px;
		top: 765px;
	}

	.arrow {
		position: absolute;
		left: 1380px;
		top: 650px;
	}
</style>
